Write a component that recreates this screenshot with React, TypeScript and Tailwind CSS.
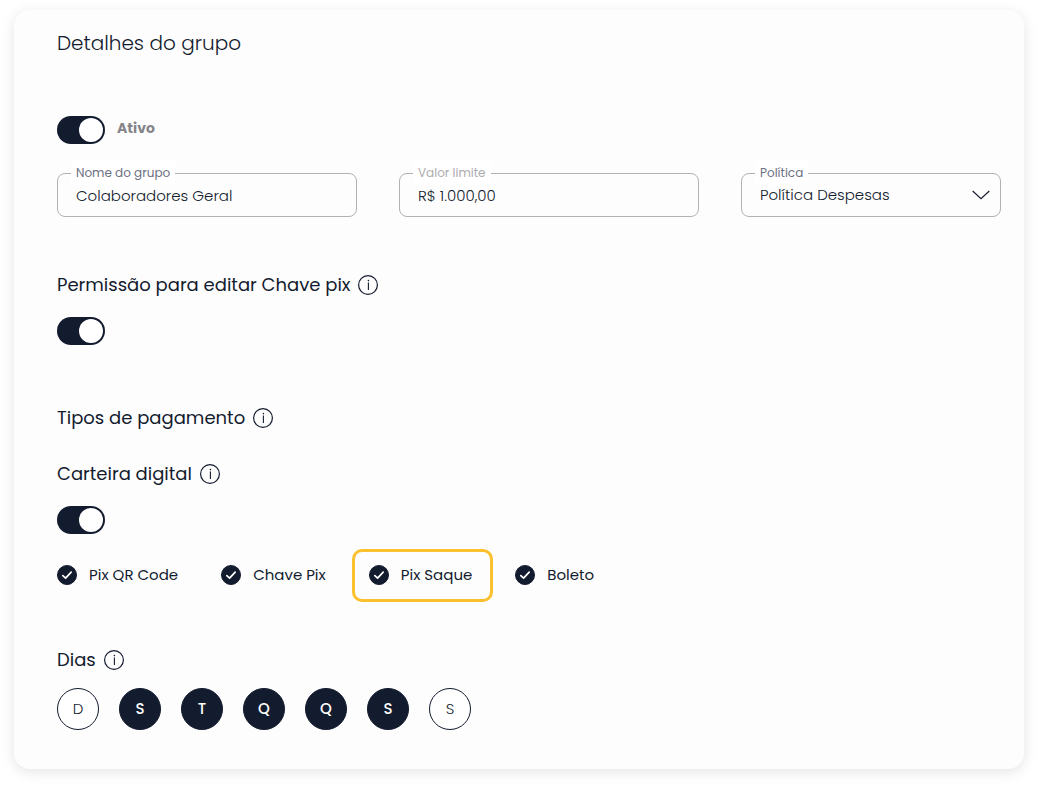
import type { ReactNode } from "react";

function InfoIcon() {
  return (
    <svg viewBox="0 0 20 20" className="size-5 shrink-0" fill="none" aria-hidden="true">
      <circle cx="10" cy="10" r="9.4" stroke="#131b2e" strokeWidth="1.2" />
      <path d="M10.4 7.6V15" stroke="#131b2e" strokeWidth="1.1" />
      <circle cx="10.4" cy="5.6" r="0.8" fill="#131b2e" />
    </svg>
  );
}

function SectionTitle({ children, className }: { children: ReactNode; className: string }) {
  return (
    <div className={`flex h-6 items-center gap-2 ${className}`}>
      <h2 className="text-lg leading-6">{children}</h2>
      <InfoIcon />
    </div>
  );
}

function Toggle({ label }: { label: string }) {
  return (
    <input
      type="checkbox"
      role="switch"
      aria-label={label}
      defaultChecked
      className="flex h-7 w-12 shrink-0 cursor-pointer appearance-none rounded-full bg-gray-300 p-0.5 before:size-6 before:rounded-full before:bg-white checked:justify-end checked:bg-[#131b2e]"
    />
  );
}

function Field({ id, label, labelColor, children }: { id: string; label: string; labelColor: string; children: ReactNode }) {
  return (
    <div className="relative">
      {children}
      <label htmlFor={id} className={`absolute -top-3 left-3.5 bg-white px-[5px] text-xs leading-6 ${labelColor}`}>
        {label}
      </label>
    </div>
  );
}

const control =
  "h-11 w-full appearance-none rounded-lg border border-[#b1b1b5] bg-transparent px-[18px] text-[15px] font-light text-[#131b2e]";

const payments = [
  { name: "Pix QR Code", highlighted: false },
  { name: "Chave Pix", highlighted: false },
  { name: "Pix Saque", highlighted: true },
  { name: "Boleto", highlighted: false },
];

const days = [
  { letter: "D", name: "Domingo", active: false },
  { letter: "S", name: "Segunda", active: true },
  { letter: "T", name: "Terça", active: true },
  { letter: "Q", name: "Quarta", active: true },
  { letter: "Q", name: "Quinta", active: true },
  { letter: "S", name: "Sexta", active: true },
  { letter: "S", name: "Sábado", active: false },
];

export default function App() {
  return (
    <main className="bg-white px-3.5 pt-2.5 pb-[18px] font-['Poppins','Inter',sans-serif] text-[#131b2e]">
      <section className="rounded-2xl bg-[#fdfdfd] pt-[18px] pr-[23px] pb-[39px] pl-[43px] shadow-[0_3px_14px_rgba(0,0,0,0.11)]">
        <h1 className="text-xl leading-[30px] font-light">Detalhes do grupo</h1>

        <div className="mt-[58px] flex gap-3">
          <Toggle label="Ativo" />
          <span className="text-sm leading-6 font-bold text-[#85858a]">Ativo</span>
        </div>

        <div className="mt-[29px] grid grid-cols-[15fr_15fr_13fr] gap-[42px]">
          <Field id="nome" label="Nome do grupo" labelColor="text-[#6b7080]">
            <input id="nome" type="text" defaultValue="Colaboradores Geral" className={control} />
          </Field>
          <Field id="valor" label="Valor limite" labelColor="text-[#acacaf]">
            <input id="valor" type="text" defaultValue="R$ 1.000,00" className={control} />
          </Field>
          <Field id="politica" label="Política" labelColor="text-[#6b7080]">
            <select id="politica" className={control}>
              <option>Política Despesas</option>
            </select>
            <svg viewBox="0 0 18 10" className="pointer-events-none absolute top-[17px] right-[11px] h-2.5 w-[18px]" fill="none" aria-hidden="true">
              <path d="M0.7 1L9 8.6L17.3 1" stroke="#131b2e" strokeWidth="1.2" />
            </svg>
          </Field>
        </div>

        <SectionTitle className="mt-14">Permissão para editar Chave pix</SectionTitle>
        <div className="mt-5">
          <Toggle label="Permissão para editar Chave pix" />
        </div>

        <SectionTitle className="mt-[61px]">Tipos de pagamento</SectionTitle>
        <SectionTitle className="mt-8">Carteira digital</SectionTitle>
        <div className="mt-5">
          <Toggle label="Carteira digital" />
        </div>

        <div className="mt-[15px] flex items-center gap-[43px]">
          {payments.map((p) => (
            <label
              key={p.name}
              className={`flex h-[53px] cursor-pointer items-center gap-3 pb-px text-[15px] ${
                p.highlighted ? "-mr-[21px] -ml-[17px] rounded-[10px] border-3 border-[#fbc02d] pr-[18px] pl-3.5" : ""
              }`}
            >
              <span className="grid size-5">
                <input
                  type="checkbox"
                  defaultChecked
                  className="peer col-start-1 row-start-1 size-5 cursor-pointer appearance-none rounded-full border border-[#131b2e] checked:bg-[#131b2e]"
                />
                <svg viewBox="0 0 20 20" className="pointer-events-none invisible col-start-1 row-start-1 size-5 peer-checked:visible" fill="none" aria-hidden="true">
                  <path d="M5.8 10.6L8.6 13.2L14.2 7.2" stroke="white" strokeWidth="1.7" strokeLinecap="round" strokeLinejoin="round" />
                </svg>
              </span>
              {p.name}
            </label>
          ))}
        </div>

        <SectionTitle className="mt-[46px]">Dias</SectionTitle>
        <div className="mt-4 flex gap-5">
          {days.map((d) => (
            <button
              key={d.name}
              type="button"
              aria-label={d.name}
              aria-pressed={d.active}
              className={`size-[42px] rounded-full border border-[#131b2e] text-[15px] ${
                d.active ? "bg-[#131b2e] font-medium text-white" : "bg-white font-light"
              }`}
            >
              {d.letter}
            </button>
          ))}
        </div>
      </section>
    </main>
  );
}
